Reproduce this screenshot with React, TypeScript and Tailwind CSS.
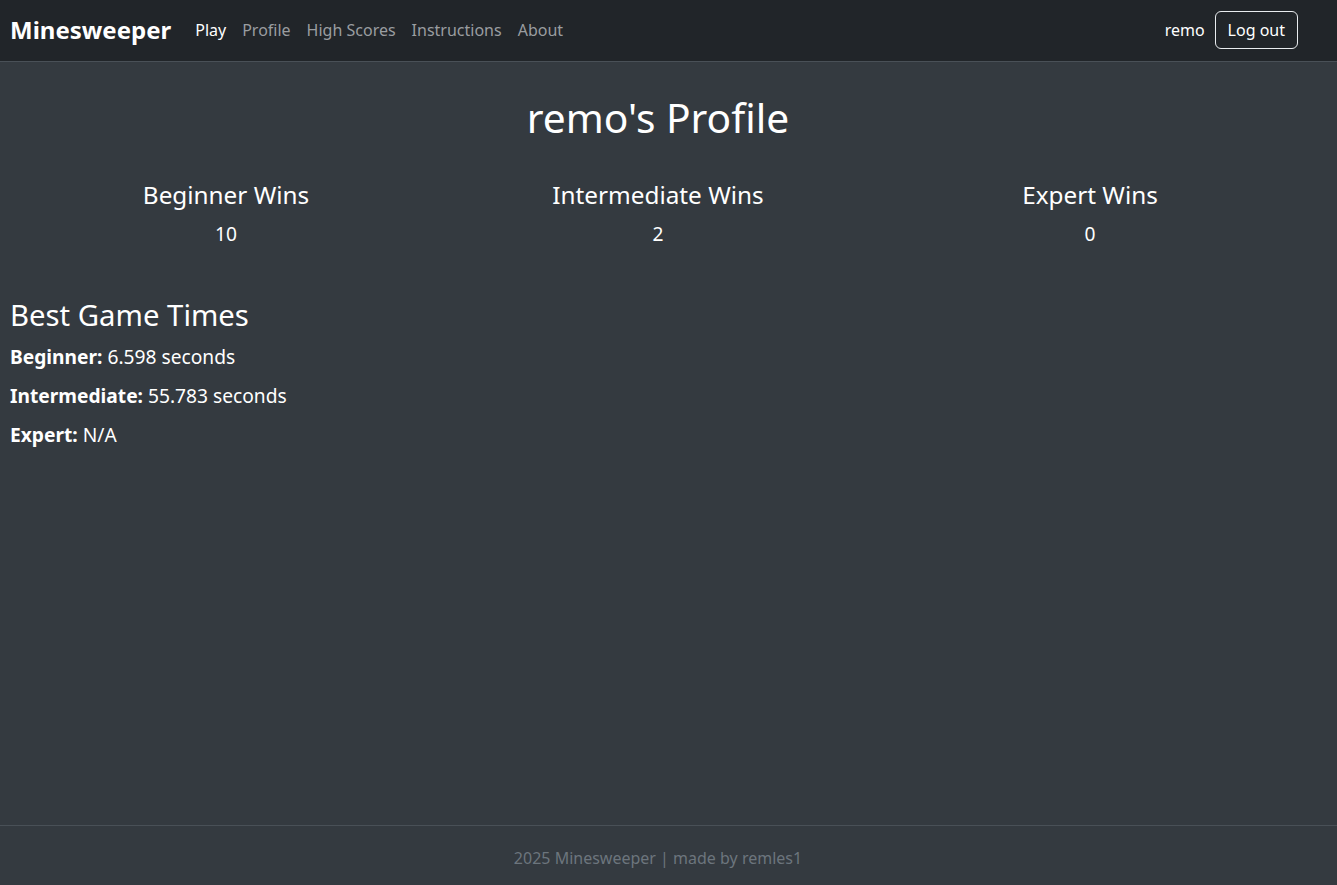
import React from "react";

export default function App() {
  const font = { fontFamily: '"Noto Sans", "Open Sans", sans-serif' };
  return (
    <div
      className="min-h-screen flex flex-col bg-[#343a40] text-white"
      style={font}
    >
      <nav className="h-[62px] bg-[#212529] border-b border-[#495057] flex items-center pl-[10px] pr-[39px] pb-[2px]">
        <span className="text-[24px] font-bold leading-[30px] mr-[24px] text-white">
          Minesweeper
        </span>
        <div className="flex items-center gap-[16px] text-[16px] leading-[24px]">
          <span className="text-white">Play</span>
          <span className="text-[#9a9da0]">Profile</span>
          <span className="text-[#9a9da0]">High Scores</span>
          <span className="text-[#9a9da0]">Instructions</span>
          <span className="text-[#9a9da0]">About</span>
        </div>
        <div className="ml-auto flex items-center">
          <span className="text-[16px] leading-[24px] mr-[10px] text-white">remo</span>
          <button className="h-[38px] px-[12px] border border-[#e9ecef] rounded-[6px] text-[16px] leading-[24px] text-white">
            Log out
          </button>
        </div>
      </nav>

      <main className="flex-1 pl-[10px] pr-[31px] pt-[31px]">
        <h1 className="text-[40.7px] leading-[49px] text-center font-normal">
          remo's Profile
        </h1>
        <div className="grid grid-cols-3 mt-[38px] text-center">
          {[
            ["Beginner Wins", "10"],
            ["Intermediate Wins", "2"],
            ["Expert Wins", "0"],
          ].map(([t, v]) => (
            <div key={t}>
              <h4 className="text-[24.3px] leading-[29px] font-normal">{t}</h4>
              <p className="text-[19.2px] leading-[29px] mt-[10px]">{v}</p>
            </div>
          ))}
        </div>
        <h3 className="text-[29.3px] leading-[35px] mt-[50px] font-normal">
          Best Game Times
        </h3>
        <div className="mt-[9px] flex flex-col gap-[10px] text-[19.2px] leading-[29px]">
          <p>
            <b className="font-bold">Beginner:</b> 6.598 seconds
          </p>
          <p>
            <b className="font-bold">Intermediate:</b> 55.783 seconds
          </p>
          <p>
            <b className="font-bold">Expert:</b> N/A
          </p>
        </div>
      </main>

      <footer className="h-[60px] border-t border-[#495057] flex items-center justify-center pl-[10px] pr-[31px] pt-[4px]">
        <span className="text-[16px] leading-[24px] text-[#6c757d]">
          2025 Minesweeper | made by remles1
        </span>
      </footer>
    </div>
  );
}
